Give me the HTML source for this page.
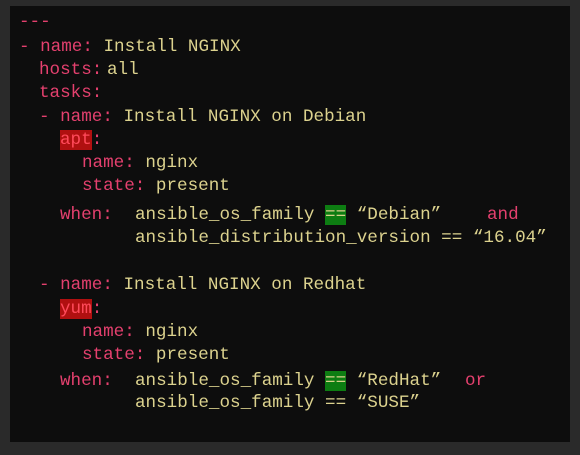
<!DOCTYPE html>
<html><head><meta charset="utf-8"><style>
html,body{margin:0;padding:0;}
body{width:580px;height:455px;background:#2a2a2a;position:relative;overflow:hidden;font-family:"Liberation Mono",monospace;font-size:17.6px;}
.panel{position:absolute;left:10px;top:6px;width:560px;height:436px;background:#0d0d0d;}
.l{position:absolute;line-height:20px;white-space:pre;color:#dcd28e;margin-top:1px;}
.p{color:#e4406e;}
.hr{background:#b01010;color:#ff4a5a;}
.hg{background:#0d7d12;color:#d8d08a;}
</style></head><body>
<div class="panel"></div>
<div class="l p" style="left:19px;top:11px">---</div>
<div class="l" style="left:19px;top:36px"><span class="p">- name:</span> Install NGINX</div>
<div class="l" style="left:39px;top:59px"><span class="p">hosts:</span></div>
<div class="l" style="left:107px;top:59px">all</div>
<div class="l p" style="left:39px;top:82px">tasks:</div>
<div class="l" style="left:39px;top:106px"><span class="p">- name:</span> Install NGINX on Debian</div>
<div class="l" style="left:60px;top:129px"><span class="hr">apt</span><span class="p">:</span></div>
<div class="l" style="left:82px;top:152px"><span class="p">name:</span> nginx</div>
<div class="l" style="left:82px;top:175px"><span class="p">state:</span> present</div>
<div class="l p" style="left:60px;top:204px">when:</div>
<div class="l" style="left:135px;top:204px">ansible_os_family <span class="hg">==</span> “Debian”</div>
<div class="l p" style="left:487px;top:204px">and</div>
<div class="l" style="left:135px;top:227px">ansible_distribution_version == “16.04”</div>
<div class="l" style="left:39px;top:274px"><span class="p">- name:</span> Install NGINX on Redhat</div>
<div class="l" style="left:60px;top:298px"><span class="hr">yum</span><span class="p">:</span></div>
<div class="l" style="left:82px;top:321px"><span class="p">name:</span> nginx</div>
<div class="l" style="left:82px;top:344px"><span class="p">state:</span> present</div>
<div class="l p" style="left:60px;top:370px">when:</div>
<div class="l" style="left:135px;top:370px">ansible_os_family <span class="hg">==</span> “RedHat”</div>
<div class="l p" style="left:465px;top:370px">or</div>
<div class="l" style="left:135px;top:392px">ansible_os_family == “SUSE”</div>
</body></html>
